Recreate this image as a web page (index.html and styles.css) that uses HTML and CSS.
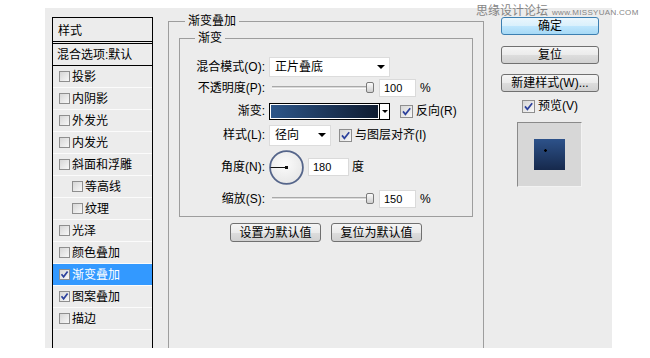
FILE: index.html
```html
<!DOCTYPE html>
<html lang="zh-CN">
<head>
<meta charset="utf-8">
<title>图层样式</title>
<link rel="stylesheet" href="styles.css">
</head>
<body>
<div class="watermark">思缘设计论坛<span class="wm-url">www.MISSYUAN.COM</span></div>
<div class="dialog">
  <aside class="side">
    <div class="styles-list">
      <div class="list-head">样式</div>
      <div class="list-blend">混合选项:默认</div>
      <div class="item"><span class="cb"></span>投影</div>
      <div class="item"><span class="cb"></span>内阴影</div>
      <div class="item"><span class="cb"></span>外发光</div>
      <div class="item"><span class="cb"></span>内发光</div>
      <div class="item"><span class="cb"></span>斜面和浮雕</div>
      <div class="item sub"><span class="cb"></span>等高线</div>
      <div class="item sub"><span class="cb"></span>纹理</div>
      <div class="item"><span class="cb"></span>光泽</div>
      <div class="item"><span class="cb"></span>颜色叠加</div>
      <div class="item selected"><span class="cb"><svg viewBox="0 0 9 9"><path d="M1.5 4.3 L3.6 6.8 L7.6 1.6" /></svg></span>渐变叠加</div>
      <div class="item"><span class="cb"><svg viewBox="0 0 9 9"><path d="M1.5 4.3 L3.6 6.8 L7.6 1.6" /></svg></span>图案叠加</div>
      <div class="item"><span class="cb"></span>描边</div>
    </div>
  </aside>

  <main class="main">
    <fieldset class="group outer">
      <legend>渐变叠加</legend>
      <fieldset class="group inner">
        <legend>渐变</legend>
        <div class="row r1">
          <span class="lbl">混合模式(O):</span>
          <div class="select wide"><span>正片叠底</span><span class="arrow"></span></div>
        </div>
        <div class="row r2">
          <span class="lbl">不透明度(P):</span>
          <div class="slider"><span class="track"></span><span class="thumb"></span></div>
          <span class="num">100</span><span class="unit">%</span>
        </div>
        <div class="row r3">
          <span class="lbl">渐变:</span>
          <div class="grad"><span class="grad-swatch"></span><span class="grad-drop"><span class="arrow small"></span></span></div>
          <span class="cb lg reverse"><svg viewBox="0 0 11 11"><path d="M2 5.4 L4.4 8.3 L9.2 2.2" /></svg></span><span class="cb-text">反向(R)</span>
        </div>
        <div class="row r4">
          <span class="lbl">样式(L):</span>
          <div class="select narrow"><span>径向</span><span class="arrow"></span></div>
          <span class="cb lg align"><svg viewBox="0 0 11 11"><path d="M2 5.4 L4.4 8.3 L9.2 2.2" /></svg></span><span class="cb-text">与图层对齐(I)</span>
        </div>
        <div class="row r5">
          <span class="lbl">角度(N):</span>
          <svg class="dial" viewBox="0 0 35 35" width="35" height="35">
            <defs>
              <radialGradient id="dialFill" cx="0.45" cy="0.4" r="0.7">
                <stop offset="0" stop-color="#fbfbfb"/>
                <stop offset="1" stop-color="#e4e4e4"/>
              </radialGradient>
            </defs>
            <circle cx="17.5" cy="17.5" r="16.4" fill="url(#dialFill)" stroke="#55658a" stroke-width="1.8"/>
            <line x1="1.5" y1="17.5" x2="17.5" y2="17.5" stroke="#111" stroke-width="1"/>
            <rect x="16" y="16" width="3" height="3" fill="#111"/>
          </svg>
          <span class="num angle">180</span><span class="unit deg">度</span>
        </div>
        <div class="row r6">
          <span class="lbl">缩放(S):</span>
          <div class="slider"><span class="track"></span><span class="thumb"></span></div>
          <span class="num">150</span><span class="unit">%</span>
        </div>
      </fieldset>
      <div class="defaults">
        <button class="btn def">设置为默认值</button>
        <button class="btn def">复位为默认值</button>
      </div>
    </fieldset>
  </main>

  <aside class="right">
    <button class="btn ok">确定</button>
    <button class="btn reset">复位</button>
    <button class="btn new">新建样式(W)...</button>
    <div class="preview-check">
      <span class="cb lg"><svg viewBox="0 0 11 11"><path d="M2 5.4 L4.4 8.3 L9.2 2.2" /></svg></span><span>预览(V)</span>
    </div>
    <div class="preview-box"><span class="swatch"></span></div>
  </aside>
</div>
</body>
</html>
```

FILE: styles.css
```css
* { box-sizing: border-box; }

html, body {
  margin: 0;
  padding: 0;
  background: #ffffff;
}

body {
  font: 12px/16px "Liberation Sans", "Noto Sans CJK SC", sans-serif;
  color: #000;
}

.watermark {
  position: absolute;
  left: 476px;
  top: 3px;
  color: #858585;
  font-size: 12px;
  line-height: 16px;
  white-space: nowrap;
  z-index: 2;
}

.wm-url {
  font-size: 8px;
  letter-spacing: 0.3px;
  margin-left: 4px;
}

.dialog {
  margin: 8px 0 0 45px;
  width: 567px;
  height: 340px;
  background: #ececec;
  display: flex;
  overflow: hidden;
}

/* ---------- left styles list ---------- */
.side {
  width: 108px;
  flex: none;
  padding: 9px 0 0 7px;
}

.styles-list {
  width: 101px;
  height: 340px;
  border: 1px solid #000;
  border-bottom: none;
}

.list-head {
  height: 26px;
  padding: 5px 0 0 5px;
  border-bottom: 3px double #000;
}

.list-blend {
  height: 22px;
  padding: 3px 0 0 4px;
  border-bottom: 1px solid #000;
}

.item {
  height: 22px;
  display: flex;
  align-items: center;
  gap: 2px;
  padding-left: 6px;
  border-bottom: 1px solid #fbfbfb;
}

.item.sub { padding-left: 19px; }

.item.selected {
  background: #3399ff;
  color: #fff;
}

.cb {
  flex: none;
  width: 11px;
  height: 11px;
  border: 1px solid #8e8e8e;
  background: linear-gradient(135deg, #d6d6d6, #f8f8f8);
  display: inline-flex;
}

.cb svg {
  width: 100%;
  height: 100%;
}

.cb path {
  fill: none;
  stroke: #2c419c;
  stroke-width: 1.7;
}

.cb.lg {
  width: 13px;
  height: 13px;
}

/* ---------- middle ---------- */
.main {
  width: 316px;
  flex: none;
  margin-left: 15px;
}

.group {
  margin: 0;
  border: 1px solid #9d9d9d;
  min-inline-size: 0;
}

.group > legend {
  padding: 0 3px;
  line-height: 16px;
}

.outer {
  margin-top: 5px;
  height: 400px;
  padding: 1px 10px 0;
}

.outer > legend { margin-left: 6px; }

.inner {
  padding: 10px 0 6px;
}

.inner > legend { margin-left: 15px; }

.row {
  display: flex;
  align-items: center;
}

.r1 { height: 22px; }
.r2 { height: 20px; }
.r3 { height: 26px; }
.r4 { height: 22px; }
.r5 { height: 42px; }
.r6 { height: 22px; }

.lbl {
  flex: none;
  width: 85px;
  margin-right: 4px;
  text-align: right;
}

.select {
  flex: none;
  background: #fff;
  border: 1px solid #dcdcdc;
  display: flex;
  align-items: center;
  justify-content: space-between;
  padding: 0 4px 0 5px;
}

.select.wide { width: 121px; height: 20px; }
.select.narrow { width: 62px; height: 21px; }

.arrow {
  width: 0;
  height: 0;
  border-left: 4px solid transparent;
  border-right: 4px solid transparent;
  border-top: 4px solid #000;
}

.arrow.small {
  border-left-width: 3px;
  border-right-width: 3px;
  border-top-width: 3px;
}

.slider {
  flex: none;
  width: 106px;
  height: 14px;
  margin-right: 4px;
  position: relative;
}

.track {
  position: absolute;
  left: 3px;
  right: 4px;
  top: 5px;
  height: 3px;
  background: #d9d9d9;
  border-top: 1px solid #a9a9a9;
  border-bottom: 1px solid #fbfbfb;
}

.thumb {
  position: absolute;
  right: 1px;
  top: 1px;
  width: 8px;
  height: 11px;
  border: 1px solid #7a7a7a;
  border-radius: 2px;
  background: linear-gradient(#fbfbfb, #cfcfcf);
}

.num {
  flex: none;
  width: 37px;
  height: 18px;
  background: #fff;
  border: 1px solid #dadada;
  padding-left: 4px;
  font-size: 11px;
  line-height: 16px;
}

.num.angle {
  width: 41px;
  margin-left: 4px;
}

.unit { margin-left: 4px; }
.unit.deg { margin-left: 3px; }

.grad {
  flex: none;
  width: 121px;
  height: 17px;
  border: 1px solid #000;
  background: #fff;
  display: flex;
}

.grad-swatch {
  flex: 1;
  border: 1px solid #fff;
  background: linear-gradient(90deg, #2d5689, #0f1b30);
}

.grad-drop {
  width: 10px;
  border-left: 1px solid #000;
  display: flex;
  align-items: center;
  justify-content: center;
}

.cb.reverse { margin-left: 10px; }
.cb.align { margin-left: 8px; }

.cb-text { margin-left: 3px; }

.dial { flex: none; }

.defaults {
  display: flex;
  justify-content: center;
  gap: 10px;
  margin-top: 6px;
}

.btn {
  font: inherit;
  color: #000;
  padding: 0;
  height: 19px;
  border: 1px solid #707070;
  border-radius: 3px;
  background: linear-gradient(#f5f5f5 0%, #ebebeb 50%, #dddddd 51%, #d1d1d1 100%);
  display: flex;
  align-items: center;
  justify-content: center;
}

.btn.def { width: 91px; }

/* ---------- right column ---------- */
.right {
  width: 128px;
  flex: none;
  padding: 9px 0 0 17px;
  display: flex;
  flex-direction: column;
}

.right .btn {
  width: 98px;
  height: 18px;
}

.btn.ok {
  border-color: #3c7fb1;
  background: linear-gradient(#eaf6fd 0%, #d9f0fc 50%, #bee6fd 51%, #a7d9f5 100%);
}

.btn.reset { margin-top: 11px; }
.btn.new { margin-top: 10px; }

.preview-check {
  width: 98px;
  height: 16px;
  margin-top: 6px;
  display: flex;
  align-items: center;
  justify-content: center;
  gap: 3px;
}

.preview-box {
  width: 65px;
  height: 65px;
  margin: 8px 0 0 16px;
  border: 1px solid;
  border-color: #8a8a8a #f2f2f2 #f2f2f2 #8a8a8a;
  background: #d7d7d7;
  display: flex;
  align-items: center;
  justify-content: center;
}

.swatch {
  width: 31px;
  height: 31px;
  background:
    radial-gradient(circle at 11.5px 11.5px, #000 1px, transparent 1.6px),
    linear-gradient(#2d528a, #16294c);
}
```
